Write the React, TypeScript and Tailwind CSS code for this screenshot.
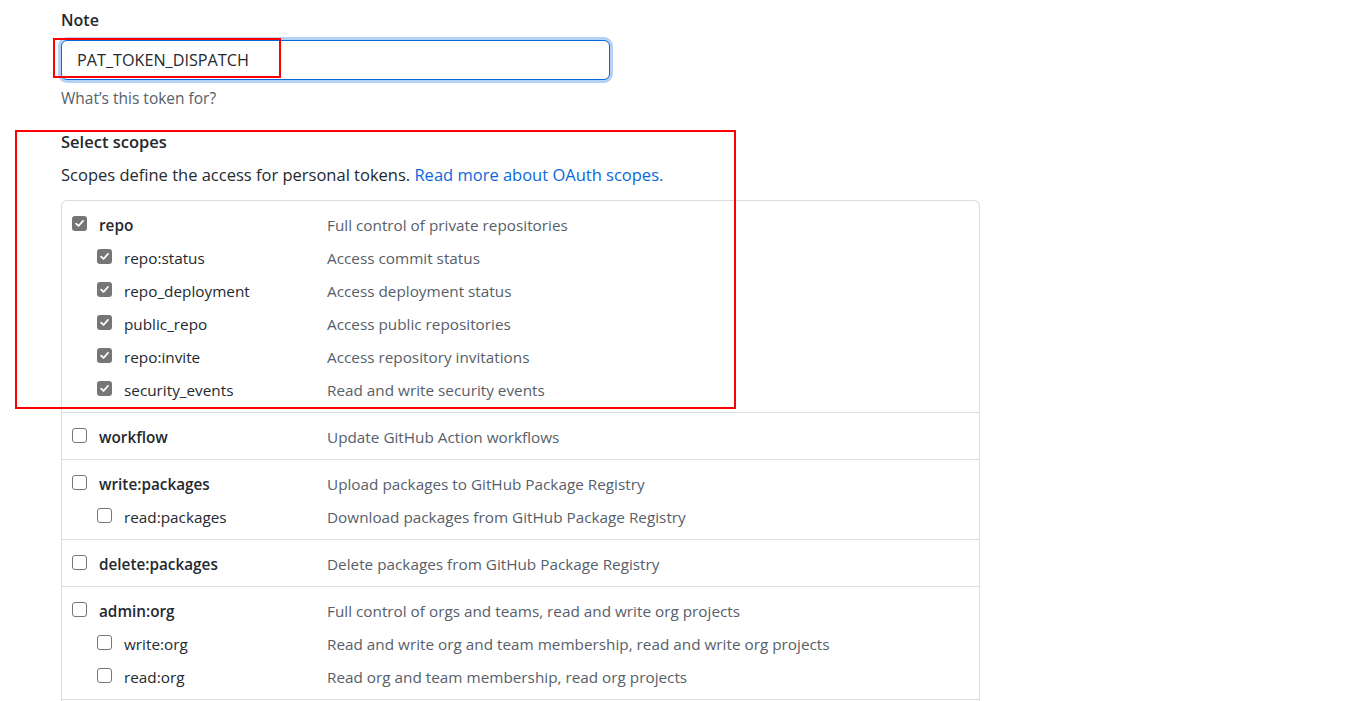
import React from "react";

type Scope = { name: string; desc: string; checked?: boolean };
type Group = { main: Scope; subs?: Scope[] };

const groups: Group[] = [
  {
    main: { name: "repo", desc: "Full control of private repositories", checked: true },
    subs: [
      { name: "repo:status", desc: "Access commit status", checked: true },
      { name: "repo_deployment", desc: "Access deployment status", checked: true },
      { name: "public_repo", desc: "Access public repositories", checked: true },
      { name: "repo:invite", desc: "Access repository invitations", checked: true },
      { name: "security_events", desc: "Read and write security events", checked: true },
    ],
  },
  { main: { name: "workflow", desc: "Update GitHub Action workflows" } },
  {
    main: { name: "write:packages", desc: "Upload packages to GitHub Package Registry" },
    subs: [{ name: "read:packages", desc: "Download packages from GitHub Package Registry" }],
  },
  { main: { name: "delete:packages", desc: "Delete packages from GitHub Package Registry" } },
  {
    main: { name: "admin:org", desc: "Full control of orgs and teams, read and write org projects" },
    subs: [
      { name: "write:org", desc: "Read and write org and team membership, read and write org projects" },
      { name: "read:org", desc: "Read org and team membership, read org projects" },
    ],
  },
];

function Checkbox({ checked }: { checked?: boolean }) {
  if (checked) {
    return (
      <span className="flex h-[15px] w-[15px] shrink-0 items-center justify-center rounded-[3px] bg-[#767676]">
        <svg viewBox="0 0 12 12" className="h-[11px] w-[11px]" fill="none">
          <path d="M2.3 6.2 L4.9 8.7 L9.8 3.2" stroke="white" strokeWidth="1.9" strokeLinecap="round" strokeLinejoin="round" />
        </svg>
      </span>
    );
  }
  return <span className="block h-[15px] w-[15px] shrink-0 rounded-[3px] border border-[#767676] bg-white" />;
}

function ScopeRow({ scope, sub }: { scope: Scope; sub?: boolean }) {
  return (
    <div className="grid h-[33px] grid-cols-[265px_1fr] items-center">
      <div className={`flex items-center gap-3 ${sub ? "pl-[35px]" : "pl-[10px]"}`}>
        <span className="-mt-[5px] block">
          <Checkbox checked={scope.checked} />
        </span>
        <span className={sub ? "text-[#24292f]" : "font-semibold text-[#24292f]"}>{scope.name}</span>
      </div>
      <div className="text-[#57606a]">{scope.desc}</div>
    </div>
  );
}

export default function App() {
  return (
    <div
      className="relative h-[701px] overflow-hidden bg-white pl-[61px] pt-[8px] text-[15.3px] text-[#24292f]"
      style={{ fontFamily: '"Open Sans", "Noto Sans", Arial, sans-serif' }}
    >
      <div className="text-[16px] font-semibold leading-6">Note</div>
      <div className="mt-2 flex h-[40px] w-[549px] items-center rounded-md border border-[#0969da] bg-white px-[15px] shadow-[0_0_0_3px_rgba(9,105,218,0.3)]">
        <span className="text-[16.2px]">PAT_TOKEN_DISPATCH</span>
      </div>
      <div className="mt-2 text-[15.5px] leading-5 text-[#57606a]">What’s this token for?</div>

      <div className="mt-[22px] text-[16.5px] font-semibold leading-6">Select scopes</div>
      <div className="mt-[9px] text-[16.5px] leading-6">
        Scopes define the access for personal tokens.{" "}
        <span className="text-[#0969da]">Read more about OAuth scopes.</span>
      </div>

      <div className="mt-[13px] w-[919px] rounded-t-md border border-b-0 border-[#d8dee4]">
        {groups.map((g, i) => (
          <div key={i} className={`pb-[5px] pt-[8px] ${i > 0 ? "border-t border-[#d8dee4]" : ""}`}>
            <ScopeRow scope={g.main} />
            {g.subs?.map((s) => (
              <ScopeRow key={s.name} scope={s} sub />
            ))}
          </div>
        ))}
        <div className="h-[40px] border-t border-[#d8dee4]" />
      </div>

      {/* annotation boxes */}
      <div className="pointer-events-none absolute left-[53px] top-[38px] h-[40px] w-[228px] border-2 border-[#ff0000]" />
      <div className="pointer-events-none absolute left-[15px] top-[130px] h-[279px] w-[721px] border-2 border-[#ff0000]" />
    </div>
  );
}
